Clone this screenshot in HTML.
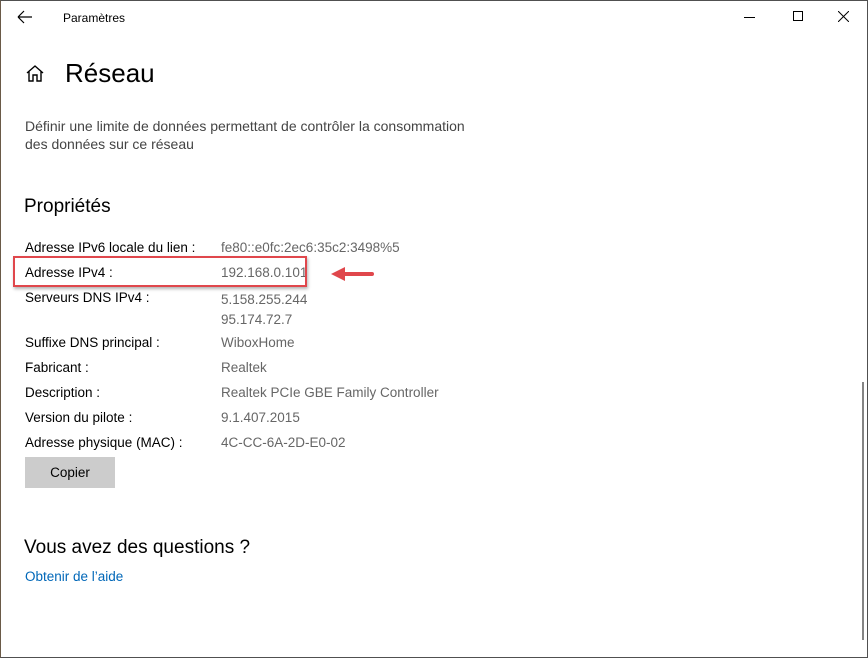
<!DOCTYPE html>
<html><head><meta charset="utf-8"><style>
*{margin:0;padding:0;box-sizing:border-box}
body{width:868px;height:658px;overflow:hidden;background:#fff;font-family:"Liberation Sans",sans-serif;position:relative}
.a{position:absolute;white-space:nowrap}
.l{font-size:13.5px;color:#000;left:25px}
.v{font-size:13.5px;color:#666;left:221px}
</style></head><body>
<div class="a" style="left:0;top:0;width:868px;height:658px;border:1px solid #505050;border-left:1px solid #6a5a48"></div>
<svg class="a" style="left:17px;top:10px" width="16" height="14" viewBox="0 0 16 14"><path d="M1 7H15M1 7L7 1M1 7L7 13" stroke="#000" stroke-width="1.2" fill="none"/></svg>
<div class="a" style="left:63px;top:11px;font-size:12px;color:#000">Paramètres</div>
<div class="a" style="left:744px;top:17px;width:11px;height:1px;background:#000"></div>
<div class="a" style="left:793px;top:11px;width:10px;height:10px;border:1px solid #000"></div>
<svg class="a" style="left:838px;top:11px" width="11" height="11"><path d="M0 0L11 11M11 0L0 11" stroke="#000" stroke-width="1"/></svg>
<svg class="a" style="left:26px;top:65px" width="18" height="17" viewBox="0 0 18 17"><path d="M1 8L9 1L17 8M3 6.5V16H7V10H11V16H15V6.5" stroke="#000" stroke-width="1.4" fill="none"/></svg>
<div class="a" style="left:65px;top:58px;font-size:26px;color:#000">Réseau</div>
<div class="a" style="left:25px;top:117px;font-size:14px;color:#444;line-height:18px">Définir une limite de données permettant de contrôler la consommation<br>des données sur ce réseau</div>
<div class="a" style="left:24px;top:196px;font-size:19px;color:#000">Propriétés</div>
<div class="a l" style="top:240px">Adresse IPv6 locale du lien :</div><div class="a v" style="top:240px">fe80::e0fc:2ec6:35c2:3498%5</div>
<div class="a l" style="top:265px">Adresse IPv4 :</div><div class="a v" style="top:265px">192.168.0.101</div>
<div class="a" style="left:13px;top:256px;width:294px;height:31px;border:2px solid #e0474c;box-shadow:1px 2px 3px rgba(0,0,0,.3)"></div>
<svg class="a" style="left:328px;top:265px" width="48" height="18"><path d="M44 9H14" stroke="#e0474c" stroke-width="4" stroke-linecap="round"/><path d="M3 9L17 2V16Z" fill="#e0474c"/></svg>
<div class="a l" style="top:290px">Serveurs DNS IPv4 :</div><div class="a v" style="top:290px;line-height:20px">5.158.255.244<br>95.174.72.7</div>
<div class="a l" style="top:335px">Suffixe DNS principal :</div><div class="a v" style="top:335px">WiboxHome</div>
<div class="a l" style="top:360px">Fabricant :</div><div class="a v" style="top:360px">Realtek</div>
<div class="a l" style="top:385px">Description :</div><div class="a v" style="top:385px">Realtek PCIe GBE Family Controller</div>
<div class="a l" style="top:410px">Version du pilote :</div><div class="a v" style="top:410px">9.1.407.2015</div>
<div class="a l" style="top:435px">Adresse physique (MAC) :</div><div class="a v" style="top:435px">4C-CC-6A-2D-E0-02</div>
<div class="a" style="left:25px;top:457px;width:90px;height:31px;background:#ccc;font-size:13.5px;text-align:center;line-height:32px;color:#000">Copier</div>
<div class="a" style="left:24px;top:537px;font-size:19px;color:#000">Vous avez des questions ?</div>
<div class="a" style="left:25px;top:569px;font-size:13.5px;color:#0067b8">Obtenir de l’aide</div>
<div class="a" style="left:862px;top:382px;width:2px;height:258px;background:#858585"></div>
</body></html>
